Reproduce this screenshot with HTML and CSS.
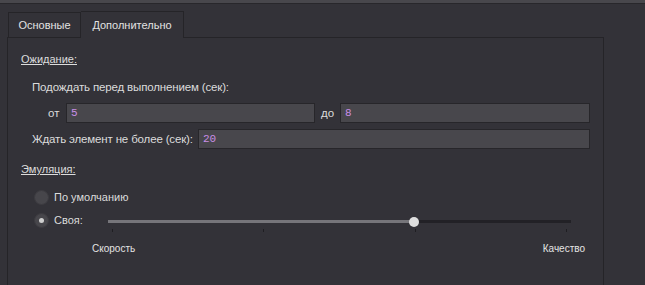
FILE: index.html
```html
<html>

<head>
    <link rel="stylesheet" href="styles.css">
</head>

<body>
    <div class="topbar"></div>

    <div class="tabs">
        <div class="tab">Основные</div>
        <div class="tab active">Дополнительно</div>
    </div>

    <div class="panel">
        <div class="heading">Ожидание:</div>

        <div class="sub">Подождать перед выполнением (сек):</div>

        <div class="range-row">
            <span class="from">от</span>
            <div class="field w-from">5</div>
            <span class="to">до</span>
            <div class="field w-to">8</div>
        </div>

        <div class="wait-row">
            <span class="wait-label">Ждать элемент не более (сек):</span>
            <div class="field w-wait">20</div>
        </div>

        <div class="heading emu">Эмуляция:</div>

        <div class="radio-row first">
            <span class="radio"></span>
            <span class="radio-label">По умолчанию</span>
        </div>

        <div class="radio-row second">
            <span class="radio checked"></span>
            <span class="radio-label own">Своя:</span>
            <div class="slider">
                <div class="groove">
                    <div class="filled" style="width: 306px"></div>
                    <div class="rest"></div>
                </div>
                <div class="handle" style="left: 301px"></div>
                <div class="ticks">
                    <span></span><span></span><span></span><span></span>
                </div>
            </div>
        </div>

        <div class="slider-labels">
            <span>Скорость</span>
            <span>Качество</span>
        </div>
    </div>
</body>

</html>
```

FILE: styles.css
```css
body {
    margin: 0;
    background-color: #333238;
    color: #dcdcdc;
    font-family: "Liberation Sans", Arial, sans-serif;
    font-size: 11px;
    white-space: nowrap;
    overflow: hidden;
}

.topbar {
    height: 3px;
    background: #48474c;
    border-bottom: 1px solid #28272b;
}

.tabs {
    display: flex;
    align-items: flex-end;
    padding-left: 8px;
    margin-top: 7px;
    height: 26px;
}

.tab {
    width: 71px;
    height: 24px;
    line-height: 24px;
    text-align: center;
    border: 1px solid #252428;
    border-bottom: none;
    color: #e2e2e2;
}

.tab.active {
    width: 102px;
    height: 26px;
    line-height: 27px;
    border-left: none;
    margin-bottom: -1px;
    background: #333238;
    position: relative;
    z-index: 2;
}

.panel {
    margin-left: 7px;
    width: 595px;
    height: 260px;
    border: 1px solid #252428;
    border-bottom: none;
}

.heading {
    margin: 14px 0 0 13px;
    height: 14px;
    line-height: 14px;
    text-decoration: underline;
}

.heading.emu {
    margin-top: 13px;
}

.sub {
    margin: 14px 0 0 24px;
    height: 14px;
    line-height: 14px;
    font-size: 11.5px;
    letter-spacing: -0.15px;
}

.range-row {
    display: flex;
    align-items: center;
    height: 20px;
    margin: 9px 0 0 40px;
    font-size: 11.5px;
}

.from {
    width: 18px;
}

.to {
    width: 19px;
    margin-left: 6px;
}

.field {
    box-sizing: border-box;
    height: 20px;
    line-height: 18px;
    padding-left: 4px;
    background: #48474c;
    border: 1px solid #27262a;
    color: #c98ee6;
    font-family: "Liberation Mono", "DejaVu Sans Mono", monospace;
    font-size: 11px;
}

.w-from {
    width: 249px;
}

.w-to {
    width: 250px;
}

.w-wait {
    width: 392px;
}

.wait-row {
    display: flex;
    align-items: center;
    height: 20px;
    margin: 6px 0 0 24px;
}

.wait-label {
    width: 166px;
    font-size: 11.5px;
    letter-spacing: -0.15px;
}

.radio-row {
    display: flex;
    align-items: flex-start;
    height: 16px;
    margin-left: 26px;
}

.radio-row.first {
    margin-top: 13px;
}

.radio-row.second {
    margin-top: 7px;
}

.radio {
    box-sizing: border-box;
    width: 15px;
    height: 15px;
    margin-top: 1px;
    border-radius: 50%;
    background: #47464b;
    border: 1px solid #3c3b40;
    display: flex;
    align-items: center;
    justify-content: center;
}

.radio.checked::after {
    content: "";
    width: 5px;
    height: 5px;
    border-radius: 50%;
    background: #cfcfcf;
}

.radio-label {
    margin-left: 5px;
    line-height: 16px;
}

.radio-label.own {
    width: 54px;
}

.slider {
    position: relative;
    width: 463px;
    height: 21px;
}

.groove {
    display: flex;
    height: 3px;
    margin-top: 8px;
}

.filled {
    background: #76757a;
}

.rest {
    flex: 1;
    background: #222126;
}

.handle {
    position: absolute;
    top: 5px;
    width: 10px;
    height: 10px;
    border-radius: 50%;
    background: #dedede;
}

.ticks {
    display: flex;
    justify-content: space-between;
    padding: 0 4px;
    margin-top: 6px;
}

.ticks span {
    width: 1px;
    height: 3px;
    background: #1f1e22;
}

.slider-labels {
    display: flex;
    justify-content: space-between;
    width: 493px;
    margin: 15px 0 0 84px;
    font-size: 10px;
    line-height: 12px;
    color: #e4e4e4;
}
```
